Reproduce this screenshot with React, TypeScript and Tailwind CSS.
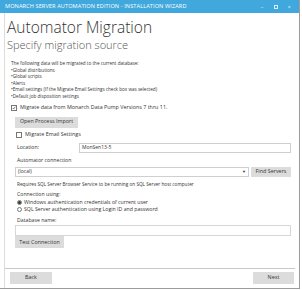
import React from "react";

const font = { fontFamily: '"Open Sans", "Noto Sans", sans-serif' };

const CheckBox = ({ checked, label }: { checked?: boolean; label: string }) => (
  <div className="flex items-center gap-[3px]">
    <div className="w-[6px] h-[6px] border border-[#777] bg-white flex items-center justify-center">
      {checked && (
        <svg width="6" height="6" viewBox="0 0 6 6">
          <path d="M1 3 L2.4 4.5 L5 1.2" stroke="#333" strokeWidth="0.9" fill="none" />
        </svg>
      )}
    </div>
    <span className="text-[5.4px] leading-none text-[#333]">{label}</span>
  </div>
);

const Radio = ({ checked, label }: { checked?: boolean; label: string }) => (
  <div className="flex items-center gap-[2px]">
    <div className="w-[5px] h-[5px] rounded-full border border-[#777] bg-white flex items-center justify-center">
      {checked && <div className="w-[3px] h-[3px] rounded-full bg-[#333]" />}
    </div>
    <span className="text-[5.2px] leading-none text-[#333]">{label}</span>
  </div>
);

const Btn = ({ children, className = "" }: { children: React.ReactNode; className?: string }) => (
  <div
    className={`bg-[#dcdcdc] text-[#333] text-[5.4px] leading-none flex items-center justify-center ${className}`}
  >
    {children}
  </div>
);

export default function App() {
  return (
    <div className="w-[302px] h-[290px] bg-white" style={font}>
      <div className="w-[300px] h-[289px] border-r border-b border-[#9c9c9c] flex flex-col">
        {/* title bar */}
        <div className="h-[13px] bg-[#40a8dc] flex items-center pl-[5px] pr-[8px] text-white">
          <span className="text-[5.6px] leading-none tracking-[0.1px] flex-1">
            MONARCH SERVER AUTOMATION EDITION - INSTALLATION WIZARD
          </span>
          <div className="flex items-center gap-[10px] text-[6px] leading-none opacity-80">
            <span>–</span>
            <div className="w-[4px] h-[4px] border border-white" />
            <span>×</span>
          </div>
        </div>

        <div className="flex-1 flex flex-col border-l border-[#dcdcdc] ml-[4px]">
          <div className="pl-[2px] pt-[5px] text-[#333] font-light text-[15.5px] leading-[18px]">
            Automator Migration
          </div>
          <div className="pl-[2px] pt-[2px] text-[#555] font-light text-[11px] leading-[13px]">
            Specify migration source
          </div>

          <div className="pl-[6px] pt-[9px] text-[4.6px] leading-[6.6px] text-[#333]">
            <div>The following data will be migrated to the current database:</div>
            <div>•Global distributions</div>
            <div>•Global scripts</div>
            <div>•Alerts</div>
            <div>•Email settings (If the Migrate Email Settings check box was selected)</div>
            <div>•Default job disposition settings</div>
          </div>

          <div className="pl-[6px] pt-[5px]">
            <CheckBox checked label="Migrate data from Monarch Data Pump Versions 7 thru 11." />
          </div>

          <div className="pl-[10px] pr-[8px] flex flex-col">
            <Btn className="w-[63px] h-[11px] mt-[6px]">Open Process Import</Btn>
            <div className="pt-[4px] pl-[1px]">
              <CheckBox label="Migrate Email Settings" />
            </div>
            <div className="flex items-center mt-[5px]">
              <span className="w-[64px] pl-[2px] text-[5.2px] leading-none text-[#333]">Location:</span>
              <div className="flex-1 h-[10px] border border-[#cfcfcf] flex items-center pl-[2px] text-[5px] text-[#333]">
                MonSen13-5
              </div>
            </div>
            <div className="pl-[2px] mt-[4px] text-[5.2px] leading-[6px] text-[#333]">Automator connection</div>
            <div className="flex items-center mt-[4px] gap-[2px]">
              <div className="flex-1 h-[10px] border border-[#cfcfcf] flex items-center justify-between px-[2px] text-[5px] text-[#333]">
                <span>(local)</span>
                <span className="text-[4px]">▼</span>
              </div>
              <Btn className="w-[40px] h-[10px]">Find Servers</Btn>
            </div>
            <div className="pl-[2px] mt-[5px] text-[4.7px] leading-[5px] text-[#333]">
              Requires SQL Server Browser Service to be running on SQL Server host computer
            </div>
            <div className="pl-[2px] mt-[4px] text-[5.2px] leading-[6px] text-[#333]">Connection using:</div>
            <div className="pl-[2px] mt-[3px] flex flex-col gap-[2.5px]">
              <Radio checked label="Windows authentication credentials of current user" />
              <Radio label="SQL Server authentication using Login ID and password" />
            </div>
            <div className="pl-[2px] mt-[5px] text-[5.2px] leading-[6px] text-[#333]">Database name:</div>
            <div className="h-[11px] border border-[#d6d6d6] mt-[2px]" />
            <Btn className="w-[49px] h-[12px]">Test Connection</Btn>
          </div>

          <div className="flex-1" />
          <div className="border-t border-[#c8c8c8] mr-[4px]" />
          <div className="flex justify-between pl-[5px] pr-[5px] pt-[3px] pb-[4px]">
            <Btn className="w-[42px] h-[12px]">Back</Btn>
            <Btn className="w-[41px] h-[12px]">Next</Btn>
          </div>
        </div>
      </div>
    </div>
  );
}
